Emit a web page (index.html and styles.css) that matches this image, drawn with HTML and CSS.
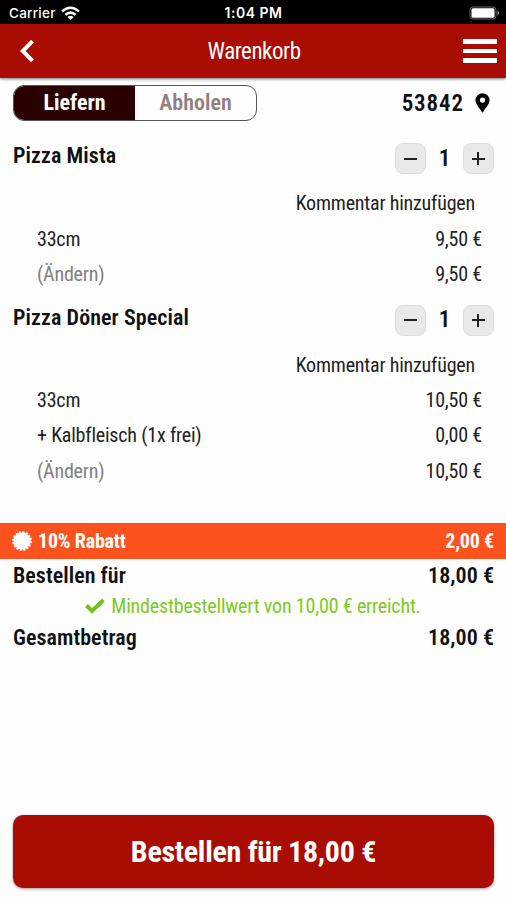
FILE: index.html
```html
<!DOCTYPE html>
<html lang="de">
<head>
<meta charset="utf-8">
<title>Warenkorb</title>
<link rel="stylesheet" href="styles.css">
</head>
<body>
<div class="status">
  <div class="carrier"><span>Carrier</span><svg width="19" height="15" viewBox="0 0 19 15" fill="none" stroke="#fff" stroke-width="2.5"><path d="M1.200 5.400Q9.500-1.800 17.800 5.400M4.400 8.800Q9.500 4.400 14.600 8.800"/><path d="M6.400 11Q9.500 8.400 12.600 11L9.500 14.200Z" fill="#fff" stroke="none"/></svg></div>
  <span class="clock">1:04 PM</span>
  <svg class="battery" width="31" height="14" viewBox="0 0 31 14"><rect x="1" y="1" width="26" height="12" rx="3" fill="none" stroke="#666"/><rect x="2.500" y="2.300" width="23" height="9.400" rx="1.500" fill="#fff"/><path d="M28.500 4.800v4.400q3-2.200 0-4.400" fill="#aaa"/></svg>
</div>
<header class="header">
  <svg width="24" height="28" viewBox="0 0 24 28" fill="none" stroke="#fff" stroke-width="4"><path d="M17.500 4.200L7.800 14l9.700 9.800"/></svg>
  <h1>Warenkorb</h1>
  <div class="menu"><i></i><i></i><i></i></div>
</header>
<main>
  <section class="mode">
    <div class="segments"><span class="on">Liefern</span><span class="off">Abholen</span></div>
    <div class="zip"><span>53842</span><svg width="15" height="20" viewBox="0 0 15 20"><path fill-rule="evenodd" d="M7.500.3A7 7 0 0 0 .5 7.300C.5 11.500 4.400 14.500 6.800 19q.7.9 1.400 0C10.600 14.500 14.500 11.500 14.500 7.300A7 7 0 0 0 7.500.3M7.500 4.500a2.600 2.600 0 1 1 0 5.200a2.600 2.600 0 1 1 0-5.200"/></svg></div>
  </section>
  <section class="item">
    <div class="head"><h2>Pizza Mista</h2><div class="stepper"><button class="minus"></button><b>1</b><button class="plus"></button></div></div>
    <div class="row comment"><span>Kommentar hinzufügen</span></div>
    <div class="row"><span>33cm</span><span>9,50 €</span></div>
    <div class="row"><span class="edit">(Ändern)</span><span>9,50 €</span></div>
  </section>
  <section class="item">
    <div class="head"><h2>Pizza Döner Special</h2><div class="stepper"><button class="minus"></button><b>1</b><button class="plus"></button></div></div>
    <div class="row comment"><span>Kommentar hinzufügen</span></div>
    <div class="row"><span>33cm</span><span>10,50 €</span></div>
    <div class="row"><span>+ Kalbfleisch (1x frei)</span><span>0,00 €</span></div>
    <div class="row"><span class="edit">(Ändern)</span><span>10,50 €</span></div>
  </section>
  <section class="discount">
    <svg width="20" height="20" viewBox="-10 -10 20 20" fill="#fff"><circle r="8.500"/><circle r="8.800" fill="none" stroke="#fff" stroke-width="2" stroke-dasharray="2.200 1.256"/></svg>
    <span class="label">10% Rabatt</span><span class="amount">2,00 €</span>
  </section>
  <section class="total"><span>Bestellen für</span><span>18,00 €</span></section>
  <p class="minimum"><svg width="20" height="16" viewBox="0 0 20 16" fill="none" stroke="#70c41a" stroke-width="4"><path d="M1.500 7.500L7 13L18.500 2"/></svg><span>Mindestbestellwert von 10,00 € erreicht.</span></p>
  <section class="total"><span>Gesamtbetrag</span><span>18,00 €</span></section>
</main>
<footer><button class="order">Bestellen für 18,00 €</button></footer>
</body>
</html>
```
FILE: styles.css
```css
* { box-sizing: border-box; margin: 0; padding: 0; }
body { height: 900px; display: flex; flex-direction: column; background: #fefefe; color: #111; font-family: "Roboto Condensed", Roboto, sans-serif; font-stretch: 75%; font-size: 20px; line-height: 24px; white-space: nowrap; overflow: hidden; }
button { border: 0; font: inherit; font-stretch: 75%; color: inherit; }
.status { height: 24px; background: #000; color: #fff; display: grid; grid-template-columns: 1fr auto 1fr; align-items: center; padding: 2px 6px 0 9px; font: 500 13.500px/20px Inter, sans-serif; }
.carrier { display: flex; align-items: center; gap: 5px; }
.carrier span { letter-spacing: .25px; }
.clock { font-size: 14px; font-weight: 600; letter-spacing: .5px; padding-right: 2px; }
.battery { justify-self: end; }
.header { height: 54px; background: #a90c02; color: #fff; display: grid; grid-template-columns: 1fr auto 1fr; align-items: center; padding: 0 9px 0 15px; box-shadow: 0 1px 3px #0008; }
.header h1 { font-size: 23px; font-weight: 400; letter-spacing: -.45px; padding: 2px 4px 0 0; }
.menu { justify-self: end; width: 34px; display: grid; gap: 5px; }
.menu i { height: 4.500px; background: #fff; }
.mode { height: 58px; display: flex; justify-content: space-between; align-items: flex-start; padding: 7px 16px 0 13px; font-size: 23px; font-weight: 600; }
.segments { width: 244px; height: 36px; display: grid; grid-template-columns: 1fr 1fr; border: 1px solid #555; border-radius: 11px; overflow: hidden; text-align: center; line-height: 34px; font-size: 22px; }
.on { background: #2b0000; color: #fff; font-weight: 700; }
.off { color: #937e7e; }
.zip { display: flex; align-items: center; gap: 11px; height: 36px; letter-spacing: .9px; }
.zip span { padding-top: 1px; }
.item { height: 161.500px; }
.item + .item { height: 225px; }
.head { height: 49px; display: flex; justify-content: space-between; align-items: flex-start; padding: 7px 12px 0 13px; }
h2 { font-size: 22px; line-height: 26px; font-weight: 600; letter-spacing: .08px; }
.stepper { width: 99px; display: flex; justify-content: space-between; align-items: center; font-size: 23px; }
.stepper b { font-weight: 600; }
.stepper button { width: 31px; height: 31px; border: 1px solid #ddd; border-radius: 8px; background: linear-gradient(#222, #222) center / 13px 2px no-repeat #e9e9e9; }
.stepper .plus { background: linear-gradient(#222, #222) center / 13px 2px no-repeat, linear-gradient(#222, #222) center / 2px 13px no-repeat #e9e9e9; }
.row { height: 35.400px; display: flex; align-items: center; justify-content: space-between; padding: 1px 24px 0 37px; letter-spacing: -.2px; color: #222; }
.comment { justify-content: flex-end; padding-right: 31px; }
.edit { color: #808080; }
.discount { height: 36px; background: #fc531e; color: #fff; display: flex; align-items: center; padding: 0 12px; font-weight: 700; letter-spacing: -.2px; }
.label { margin-left: 6px; }
.amount { margin-left: auto; }
.total { height: 32px; display: flex; justify-content: space-between; align-items: center; padding: 2px 12px 0 13px; font-size: 22px; font-weight: 600; letter-spacing: .05px; }
.minimum { height: 30px; padding-top: 1px; display: flex; align-items: center; justify-content: center; gap: 6px; color: #7dc91f; letter-spacing: -.18px; }
footer { margin-top: auto; padding: 0 12px 12px 13px; }
.order { width: 481px; height: 73px; border-radius: 10px; background: #a90c02; color: #fff; font-size: 30px; font-weight: 700; letter-spacing: -.27px; box-shadow: 0 1px 3px #0006; }
```
